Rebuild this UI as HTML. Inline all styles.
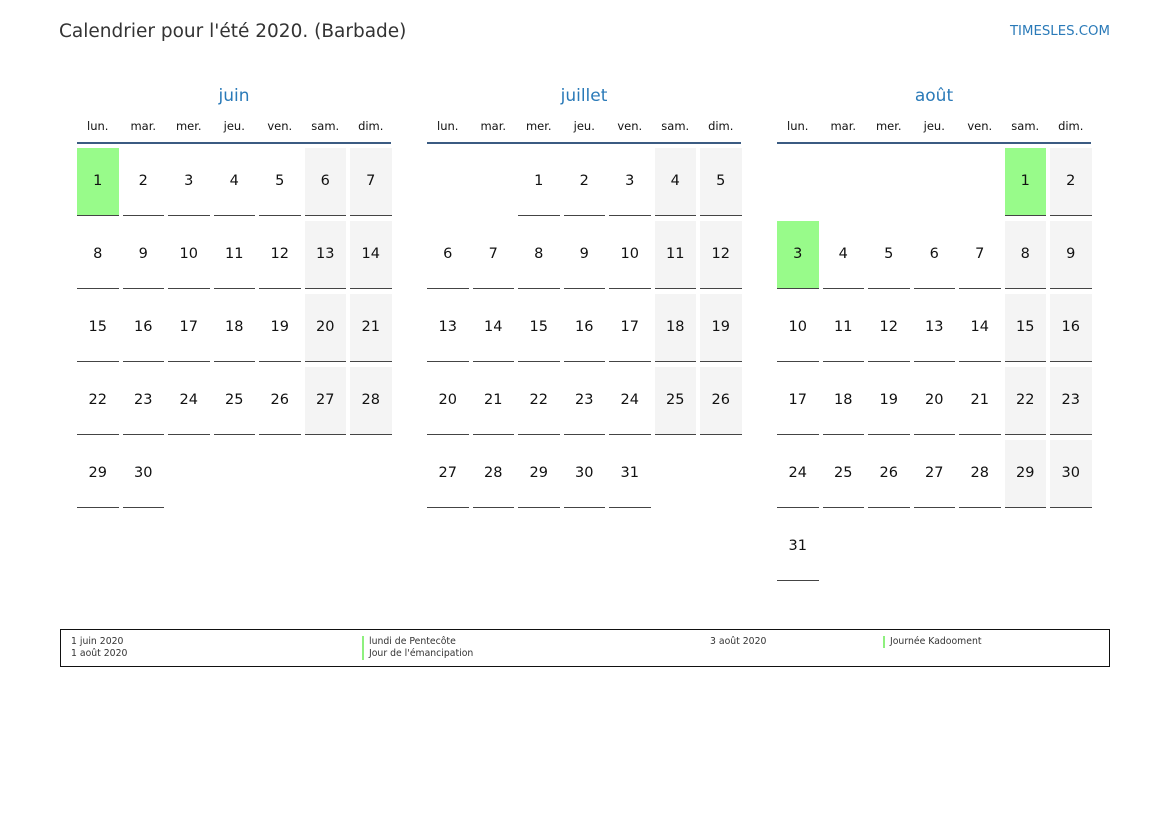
<!DOCTYPE html>
<html><head><meta charset="utf-8"><style>
*{margin:0;padding:0;box-sizing:border-box}
body{width:1169px;height:827px;background:#fff;font-family:"DejaVu Sans","Liberation Sans",sans-serif;position:relative;overflow:hidden;color:#111}
.title{position:absolute;left:59px;top:21px;font-size:18.5px;color:#333}
.site{position:absolute;right:59px;top:24px;font-size:13.3px;color:#2a7ab8}
.m{position:absolute;top:85px;width:314px}
.mt{text-align:center;color:#2a7ab8;font-size:17px;height:24px;line-height:22px}
.dn{display:grid;grid-template-columns:repeat(7,41.5px);column-gap:4px;font-size:11.5px;text-align:center;border-bottom:2px solid #3b5b82;margin-bottom:4px;height:35px;line-height:18px;padding-top:8px}
.g{display:grid;grid-template-columns:repeat(7,41.5px);column-gap:4px;row-gap:5px;grid-auto-rows:68px}
.g div{border-bottom:1.5px solid #444;text-align:center;line-height:67px;font-size:14.5px}
.g .w{background:#f4f4f4}
.g .h{background:#98fb8a}
.g .e{border:none}
.leg{position:absolute;left:60px;top:629px;width:1050px;height:38px;border:1.5px solid #111;font-size:9.3px;color:#333;line-height:12px}
.leg span{position:absolute}
.bar{border-left:2.5px solid #8ef07e;padding-left:5px}
</style></head><body>
<div class="title">Calendrier pour l'été 2020. (Barbade)</div>
<div class="site">TIMESLES.COM</div>

<div class="m" style="left:77px">
<div class="mt">juin</div>
<div class="dn"><span>lun.</span><span>mar.</span><span>mer.</span><span>jeu.</span><span>ven.</span><span>sam.</span><span>dim.</span></div>
<div class="g">
<div class="h">1</div><div>2</div><div>3</div><div>4</div><div>5</div><div class="w">6</div><div class="w">7</div>
<div>8</div><div>9</div><div>10</div><div>11</div><div>12</div><div class="w">13</div><div class="w">14</div>
<div>15</div><div>16</div><div>17</div><div>18</div><div>19</div><div class="w">20</div><div class="w">21</div>
<div>22</div><div>23</div><div>24</div><div>25</div><div>26</div><div class="w">27</div><div class="w">28</div>
<div>29</div><div>30</div>
</div></div>

<div class="m" style="left:427px">
<div class="mt">juillet</div>
<div class="dn"><span>lun.</span><span>mar.</span><span>mer.</span><span>jeu.</span><span>ven.</span><span>sam.</span><span>dim.</span></div>
<div class="g">
<div class="e"></div><div class="e"></div><div>1</div><div>2</div><div>3</div><div class="w">4</div><div class="w">5</div>
<div>6</div><div>7</div><div>8</div><div>9</div><div>10</div><div class="w">11</div><div class="w">12</div>
<div>13</div><div>14</div><div>15</div><div>16</div><div>17</div><div class="w">18</div><div class="w">19</div>
<div>20</div><div>21</div><div>22</div><div>23</div><div>24</div><div class="w">25</div><div class="w">26</div>
<div>27</div><div>28</div><div>29</div><div>30</div><div>31</div>
</div></div>

<div class="m" style="left:777px">
<div class="mt">août</div>
<div class="dn"><span>lun.</span><span>mar.</span><span>mer.</span><span>jeu.</span><span>ven.</span><span>sam.</span><span>dim.</span></div>
<div class="g">
<div class="e"></div><div class="e"></div><div class="e"></div><div class="e"></div><div class="e"></div><div class="h">1</div><div class="w">2</div>
<div class="h">3</div><div>4</div><div>5</div><div>6</div><div>7</div><div class="w">8</div><div class="w">9</div>
<div>10</div><div>11</div><div>12</div><div>13</div><div>14</div><div class="w">15</div><div class="w">16</div>
<div>17</div><div>18</div><div>19</div><div>20</div><div>21</div><div class="w">22</div><div class="w">23</div>
<div>24</div><div>25</div><div>26</div><div>27</div><div>28</div><div class="w">29</div><div class="w">30</div>
<div>31</div>
</div></div>

<div class="leg">
<span style="left:10px;top:6px">1 juin 2020<br>1 août 2020</span>
<span style="left:301px;top:6px"><span class="bar" style="position:static;display:block">lundi de Pentecôte</span><span class="bar" style="position:static;display:block">Jour de l'émancipation</span></span>
<span style="left:649px;top:6px">3 août 2020</span>
<span style="left:822px;top:6px" class="bar">Journée Kadooment</span>
</div>
</body></html>
